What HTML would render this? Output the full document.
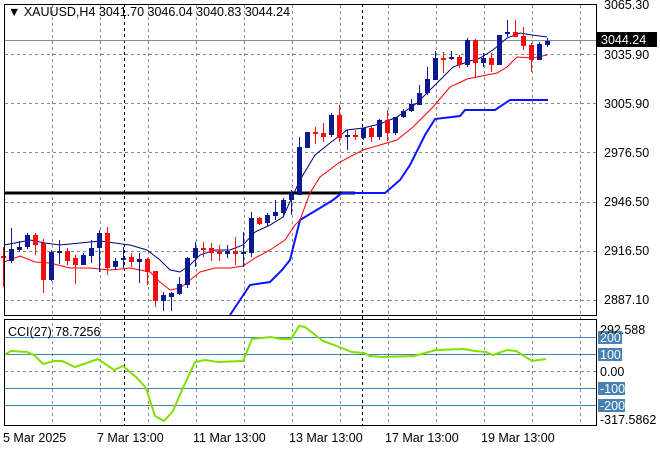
<!DOCTYPE html>
<html><head><meta charset="utf-8"><style>
body{margin:0;background:#fff;width:660px;height:450px;overflow:hidden;font-family:"Liberation Sans",sans-serif}
svg text{font-family:"Liberation Sans",sans-serif;font-size:12.5px;fill:#000}
</style></head><body>
<svg id="s" width="660" height="450" xmlns="http://www.w3.org/2000/svg">
<rect width="660" height="450" fill="#fff"/>
<g id="grid" stroke="#808890" stroke-dasharray="3,3" stroke-width="1"></g>
<line x1="124.5" y1="4" x2="124.5" y2="426" stroke="#000" stroke-dasharray="3,3"/>
<line x1="362.5" y1="4" x2="362.5" y2="426" stroke="#000" stroke-dasharray="3,3"/>
<line x1="4" y1="40.5" x2="596" y2="40.5" stroke="#8090a0"/>
<g id="c"></g>
<rect x="4.5" y="4.5" width="592" height="311" fill="none" stroke="#000"/>
<rect x="4.5" y="319.5" width="592" height="106" fill="none" stroke="#000"/>
<text x="8" y="16">▼ XAUUSD,H4  3041.70 3046.04 3040.83 3044.24</text>
<text x="604" y="9">3065.30</text>
<rect x="597" y="32" width="60" height="15" fill="#000"/>
<text x="601" y="44" style="fill:#fff">3044.24</text>
<text x="604" y="59">3035.90</text>
<text x="604" y="108">3005.90</text>
<text x="604" y="157">2976.50</text>
<text x="604" y="206">2946.50</text>
<text x="604" y="255">2916.50</text>
<text x="604" y="304">2887.10</text>
<text x="8" y="336">CCI(27) 78.7256</text>
<rect x="598" y="331" width="24" height="13" fill="#4682b4"/>
<rect x="598" y="348" width="24" height="13" fill="#4682b4"/>
<rect x="598" y="382" width="27" height="13" fill="#4682b4"/>
<rect x="598" y="399" width="27" height="13" fill="#4682b4"/>
<text x="600" y="334">292.588</text>
<text x="600" y="342" style="fill:#fff">200</text>
<text x="600" y="359" style="fill:#fff">100</text>
<text x="600" y="376">0.00</text>
<text x="600" y="393" style="fill:#fff">-100</text>
<text x="600" y="410" style="fill:#fff">-200</text>
<text x="600" y="424">-317.5862</text>
<text x="3" y="442">5 Mar 2025</text>
<text x="97" y="442">7 Mar 13:00</text>
<text x="193" y="442">11 Mar 13:00</text>
<text x="289" y="442">13 Mar 13:00</text>
<text x="385" y="442">17 Mar 13:00</text>
<text x="481" y="442">19 Mar 13:00</text>
</svg>
<script>
const N='http://www.w3.org/2000/svg',g=document.getElementById('grid'),c=document.getElementById('c');
function el(t,a,p){const e=document.createElementNS(N,t);for(const k in a)e.setAttribute(k,a[k]);(p||c).appendChild(e);return e}
for(let x=52;x<596;x+=48){if(x==124)continue;el('line',{x1:x+.5,y1:5,x2:x+.5,y2:426},g);}
[54,103,152,202,251,300].forEach(y=>el('line',{x1:5,y1:y+.5,x2:596,y2:y+.5},g));
el('line',{x1:5,y1:371.5,x2:596,y2:371.5},g);
[337,354,388,405].forEach(y=>el('line',{x1:5,y1:y+.5,x2:596,y2:y+.5,stroke:'#4682b4','stroke-dasharray':'none'}));
const K=[[256,258,247,287],[261,249,228,263],[250,247,241,252],[247,235,233,249],[235,245,233,255],[243,280,239,293],[280,252,250,281],[253,251,240,264],[251,261,248,265],[258,265,255,284],[265,255,253,265],[256,248,240,263],[248,233,230,272],[233,268,227,275],[267,261,258,270],[259,258,247,268],[257,262,253,267],[262,259,253,283],[259,272,258,285],[271,301,271,307],[301,295,292,311],[297,293,292,311],[294,284,277,295],[285,258,257,288],[258,248,242,267],[248,250,242,257],[248,253,243,261],[251,254,245,261],[254,251,245,258],[251,254,237,265],[254,252,232,267],[253,218,212,257],[218,224,217,225],[223,215,213,226],[216,212,200,220],[213,200,198,217],[200,193,190,215],[195,147,137,195],[148,132,132,148],[132,134,127,144],[133,137,123,142],[135,115,113,137],[115,138,105,142],[136,135,130,150],[135,137,130,140],[138,128,128,140],[128,137,126,142],[137,120,119,140],[120,133,110,141],[133,117,117,135],[117,111,109,118],[111,104,99,112],[105,93,85,105],[93,79,67,95],[80,58,51,80],[58,59,52,73],[59,57,51,60],[57,65,55,68],[65,40,38,67],[40,63,39,77],[63,58,53,67],[58,65,53,72],[65,35,35,65],[33,32,20,37],[32,37,20,37],[36,46,27,50],[45,60,43,72],[60,44,42,60],[45,41,38,47]];
el('line',{x1:4,y1:193,x2:355,y2:193,stroke:'#000','stroke-width':3});
el('polyline',{points:'230,315 250,285 270,282 282,270 290,260 300,220 310,214 320,208 333,200 342,193 355,193 385,193 400,180 410,165 425,135 435,119 460,116 465,110 495,110 510,100 548,100',fill:'none',stroke:'#0a14ff','stroke-width':2});
el('polyline',{points:'4,262 20,256 35,262 50,263 70,268 90,268 110,270 130,268 150,272 160,282 170,290 180,288 190,280 200,272 215,268 230,268 243,266 255,258 270,250 285,240 295,225 300,220 310,193 320,177 340,162 363,150 397,140 413,127 433,107 450,87 467,79 497,73 507,67 517,57 533,58 547,55',fill:'none',stroke:'#f00','stroke-width':1});
el('polyline',{points:'4,245 15,243 30,240 45,243 60,245 80,243 100,241 115,243 130,245 147,250 160,260 170,270 180,272 190,265 200,255 215,250 230,250 243,245 255,232 270,225 283,217 300,180 315,155 330,143 347,130 363,128 380,124 397,117 417,103 433,87 453,67 467,62 480,58 493,50 507,38 520,33 532,35 547,37',fill:'none',stroke:'#000080','stroke-width':1});
K.forEach((k,i)=>{const x=3+8*i,[o,cc,h,l]=k,up=cc<o;const col=up?'#0c1a90':'#f01010';
const t=Math.min(o,cc),bt=Math.max(o,cc);
el('line',{x1:x+.5,y1:h,x2:x+.5,y2:l,stroke:col});
el('rect',{x:x-2,y:t,width:5,height:Math.max(bt-t,2),fill:col});});
el('polyline',{points:'4,355 11,351 27,352 34,355 43,364 54,361 62,361 75,367 98,359 114,370 123,366 137,378 146,388 155,416 164,421 173,411 182,390 195,362 205,360 218,362 243,361 252,339 271,337 280,339 291,339 299,326 305,327 323,341 334,345 352,352 364,353 370,356 382,357 414,356 436,350 464,349 475,351 486,352 493,355 507,350 516,351 532,361 546,359',fill:'none',stroke:'#7fe000','stroke-width':2});
</script>
</body></html>
